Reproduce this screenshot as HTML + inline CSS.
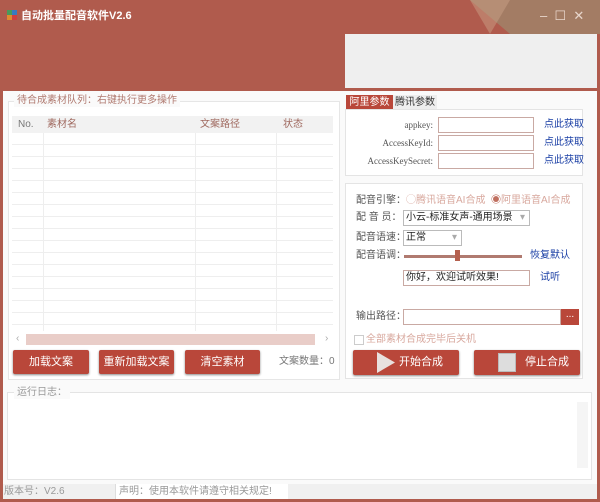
<!DOCTYPE html>
<html><head><meta charset="utf-8"><style>
*{margin:0;padding:0;box-sizing:border-box}
body{width:600px;height:502px;overflow:hidden;background:#b05b4d;font-family:"Liberation Sans","Noto Sans CJK SC",sans-serif;font-size:10px;color:#555;position:relative;line-height:12px}
.a{position:absolute}
.t{position:absolute;white-space:nowrap;line-height:12px}
.btn{position:absolute;background:#b9473a;color:#fff;border-radius:2px;text-align:center;font-size:11px;box-shadow:0 1px 2px #888}
.inp{position:absolute;background:#fff;border:1px solid #c9a9a3}
.lk{color:#1a3fa5}
</style></head><body>
<svg class="a" style="left:470px;top:0" width="130" height="34"><polygon points="0,0 130,0 130,34 40,34" fill="#a0846a" opacity="0.8"/><polygon points="0,0 40,0 20,34" fill="#c9a086" opacity="0.5"/></svg>
<svg class="a" style="left:6px;top:9px" width="12" height="12"><rect x="1" y="1" width="5" height="5" fill="#4a9a5a"/><rect x="6" y="1" width="5" height="5" fill="#3a7ac0"/><rect x="1" y="6" width="5" height="5" fill="#e08a30"/><rect x="6" y="6" width="5" height="5" fill="#d04040"/></svg>
<div class="t" style="left:21px;top:10px;color:#fff;font-size:11px;font-weight:bold">自动批量配音软件V2.6</div>
<div class="t" style="left:540px;top:10px;color:#e8d6cc;font-size:13px">–&nbsp;&nbsp;☐&nbsp;&nbsp;✕</div>
<div class="a" style="left:345px;top:34px;width:252px;height:54px;background:#efefef"></div>
<div class="a" style="left:3px;top:91px;width:594px;height:408px;background:#fafafa"></div>
<div class="a" style="left:8px;top:101px;width:332px;height:279px;border:1px solid #e6e6e6;background:#fff"></div>
<div class="t" style="left:14px;top:95px;background:#fafafa;padding:0 3px;color:#b07a70">待合成素材队列：右键执行更多操作</div>
<div class="a" style="left:12px;top:116px;width:321px;height:17px;background:#f2f2f2"></div>
<div class="t" style="left:18px;top:119px;color:#777">No.</div>
<div class="t" style="left:47px;top:119px;color:#a06a60">素材名</div>
<div class="t" style="left:200px;top:119px;color:#a06a60">文案路径</div>
<div class="t" style="left:283px;top:119px;color:#a06a60">状态</div>
<div class="a" style="left:12px;top:133px;width:321px;height:198px;background:repeating-linear-gradient(#fff 0 11px,#eee 11px 12px)"></div>
<div class="a" style="left:43px;top:133px;width:1px;height:198px;background:#eee"></div>
<div class="a" style="left:195px;top:133px;width:1px;height:198px;background:#eee"></div>
<div class="a" style="left:276px;top:133px;width:1px;height:198px;background:#eee"></div>
<div class="t" style="left:16px;top:333px;color:#aaa">‹</div>
<div class="a" style="left:26px;top:334px;width:289px;height:11px;background:#e9cdc8"></div>
<div class="t" style="left:325px;top:333px;color:#aaa">›</div>
<div class="btn" style="left:13px;top:350px;width:76px;height:24px;line-height:24px">加载文案</div>
<div class="btn" style="left:99px;top:350px;width:75px;height:24px;line-height:24px">重新加载文案</div>
<div class="btn" style="left:185px;top:350px;width:75px;height:24px;line-height:24px">清空素材</div>
<div class="t" style="left:279px;top:356px;color:#777">文案数量：0</div>
<div class="a" style="left:346px;top:95px;width:47px;height:15px;background:#b9473a;color:#fff;text-align:center;line-height:15px">阿里参数</div>
<div class="a" style="left:393px;top:95px;width:44px;height:15px;background:#eee;color:#333;text-align:center;line-height:15px">腾讯参数</div>
<div class="a" style="left:345px;top:109px;width:238px;height:67px;border:1px solid #e4e4e4;background:#fff"></div>
<div class="t" style="left:345px;top:119px;width:88px;text-align:right;font-family:'Liberation Serif',serif;font-size:9px">appkey:</div>
<div class="t" style="left:345px;top:137px;width:88px;text-align:right;font-family:'Liberation Serif',serif;font-size:9px">AccessKeyId:</div>
<div class="t" style="left:345px;top:155px;width:88px;text-align:right;font-family:'Liberation Serif',serif;font-size:9px">AccessKeySecret:</div>
<div class="inp" style="left:438px;top:117px;width:96px;height:16px"></div>
<div class="inp" style="left:438px;top:135px;width:96px;height:16px"></div>
<div class="inp" style="left:438px;top:153px;width:96px;height:16px"></div>
<div class="t lk" style="left:544px;top:119px">点此获取</div>
<div class="t lk" style="left:544px;top:137px">点此获取</div>
<div class="t lk" style="left:544px;top:155px">点此获取</div>
<div class="a" style="left:345px;top:183px;width:238px;height:196px;border:1px solid #e4e4e4;background:#fff"></div>
<div class="t" style="left:356px;top:195px">配音引擎：<span style="color:#d8a89e">◯腾讯语音AI合成&nbsp;&nbsp;<b style="color:#c07060">◉</b>阿里语音AI合成</span></div>
<div class="t" style="left:356px;top:212px">配 音 员：</div>
<div class="inp" style="left:403px;top:210px;width:127px;height:16px;border-color:#bbb;color:#222;padding-left:2px;line-height:14px">小云-标准女声-通用场景 <span style="color:#aaa;float:right;padding-right:4px">▾</span></div>
<div class="t" style="left:356px;top:232px">配音语速：</div>
<div class="inp" style="left:403px;top:230px;width:59px;height:16px;border-color:#bbb;color:#222;padding-left:2px;line-height:14px">正常<span style="color:#aaa;float:right;padding-right:4px">▾</span></div>
<div class="t" style="left:356px;top:250px">配音语调：</div>
<div class="a" style="left:404px;top:255px;width:118px;height:3px;background:#b07a70"></div>
<div class="a" style="left:455px;top:250px;width:5px;height:11px;background:#b5604e"></div>
<div class="t lk" style="left:530px;top:250px">恢复默认</div>
<div class="inp" style="left:403px;top:270px;width:127px;height:16px;color:#222;padding-left:2px;line-height:14px">你好，欢迎试听效果!</div>
<div class="t lk" style="left:540px;top:272px">试听</div>
<div class="t" style="left:356px;top:311px">输出路径：</div>
<div class="inp" style="left:403px;top:309px;width:158px;height:16px"></div>
<div class="a" style="left:561px;top:309px;width:18px;height:16px;background:#b9473a;color:#fff;text-align:center;line-height:12px">...</div>
<div class="a" style="left:354px;top:335px;width:10px;height:10px;border:1px solid #ccc;background:#fff"></div>
<div class="t" style="left:366px;top:334px;color:#d8a89e">全部素材合成完毕后关机</div>
<div class="btn" style="left:353px;top:350px;width:106px;height:25px;line-height:25px;padding-left:30px">开始合成</div>
<svg class="a" style="left:376px;top:352px" width="20" height="21"><polygon points="1,0 19,10.5 1,21" fill="#e8e0de"/></svg>
<div class="btn" style="left:474px;top:350px;width:106px;height:25px;line-height:25px;padding-left:40px">停止合成</div>
<div class="a" style="left:498px;top:353px;width:18px;height:19px;background:#ddd;border:1px solid #bbb"></div>
<div class="a" style="left:7px;top:392px;width:585px;height:88px;border:1px solid #e4e4e4;background:#fff"></div>
<div class="t" style="left:14px;top:387px;background:#fafafa;padding:0 3px;color:#999">运行日志：</div>
<div class="a" style="left:577px;top:402px;width:11px;height:66px;background:#f5f5f5"></div>
<div class="a" style="left:3px;top:484px;width:594px;height:15px;background:#f0f0f0"></div>
<div class="t" style="left:4px;top:486px;color:#999">版本号：V2.6</div>
<div class="a" style="left:115px;top:484px;width:173px;height:15px;background:#fff;border-left:1px solid #ddd"></div>
<div class="t" style="left:119px;top:486px;color:#999">声明：使用本软件请遵守相关规定!</div>
</body></html>
